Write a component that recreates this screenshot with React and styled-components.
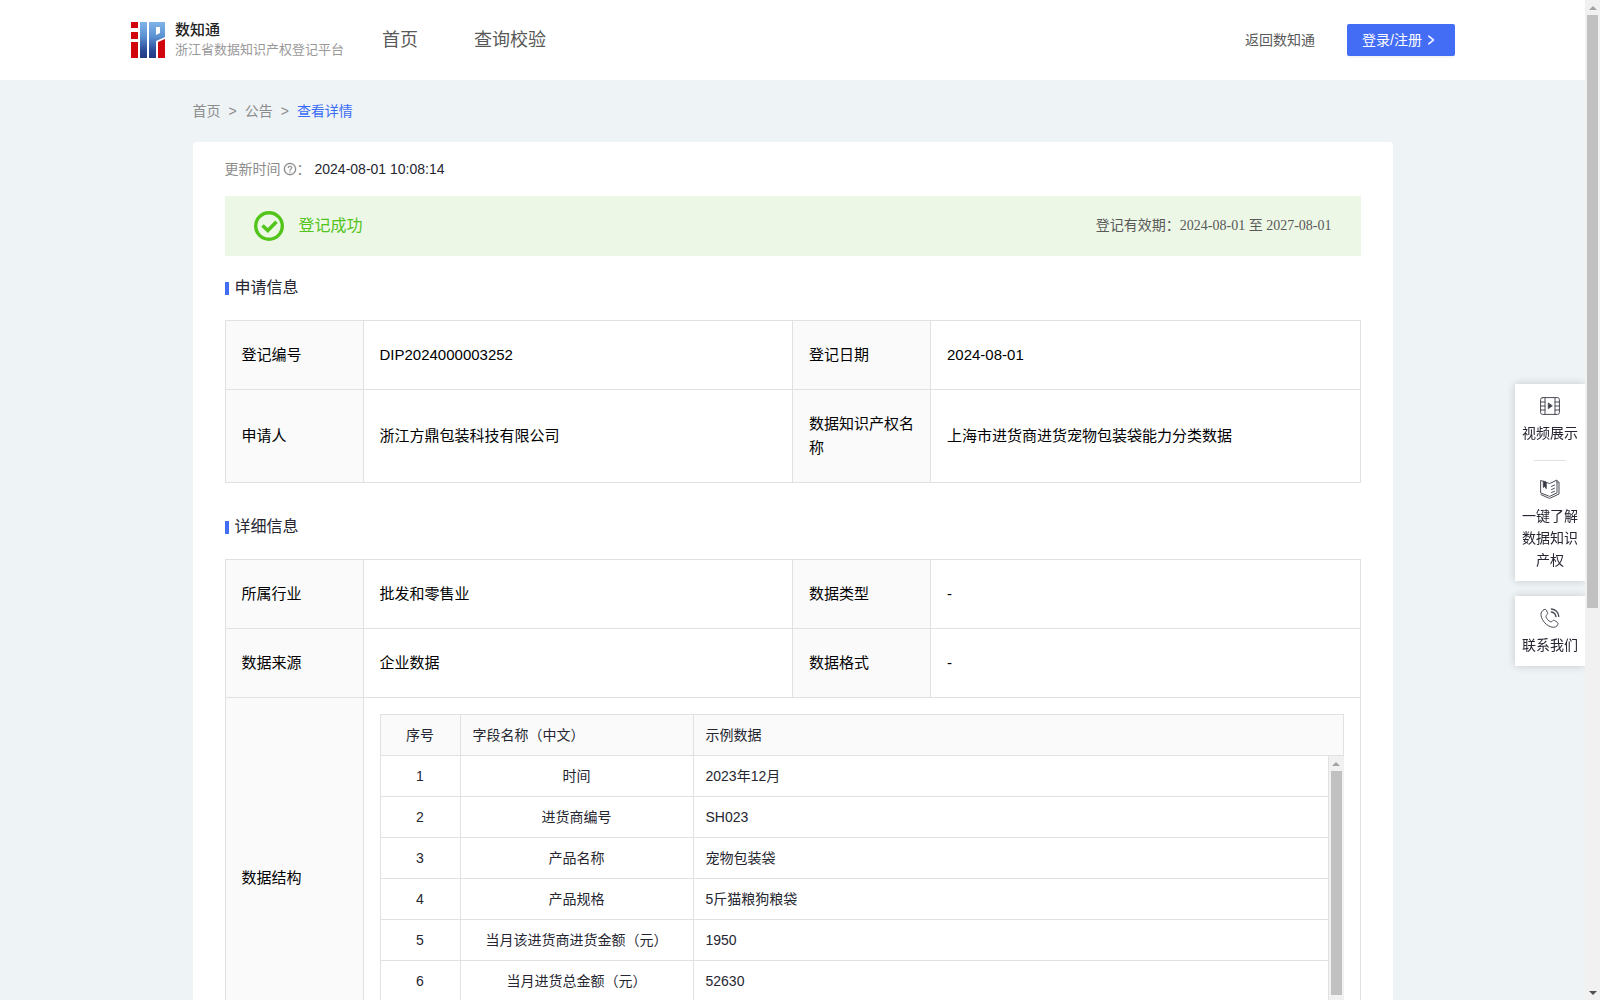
import React from "react"
import styled, { createGlobalStyle, css } from "styled-components"
import { AiOutlineQuestionCircle, AiOutlineRight } from "react-icons/ai"

const colors = {
	primary: "#446df6",
	link: "#3a6cf6",
	text: "#252631",
	secondary: "#595959",
	muted: "#8c8c8c",
	success: "#52c41a",
	successBg: "#ecf7e6",
	page: "#eef3f6",
	border: "#e1e1e1",
	label: "#fafafa",
}

const GlobalStyle = createGlobalStyle`
	* {
		box-sizing: border-box;
	}

	body {
		margin: 0;
		color: ${colors.text};
		font-family: "Liberation Sans", "Noto Sans CJK SC", sans-serif;
		font-size: 14px;
		line-height: 22px;
	}

	a {
		color: inherit;
		text-decoration: none;
	}
`

const Shell = styled.div`
	display: flex;
	height: 100vh;
	position: relative;
`

const Page = styled.div`
	background: ${colors.page};
	flex: 1;
	min-width: 0;
	overflow-y: auto;
	scrollbar-width: none;
`

/* scroll rail, used by the page and by the field list */
const Rail = styled.div`
	background: #f1f1f1;
	display: flex;
	flex: none;
	flex-direction: column;
	padding: 0 2px;
	width: 15px;
`

const RailArrow = styled.span`
	align-items: center;
	display: flex;
	flex: none;
	height: 15px;
	justify-content: center;

	&::before {
		border: 4px solid transparent;
		border-top-width: 0;
		border-bottom: 4px solid #a3a3a3;
		content: "";
	}

	${({ $down }) =>
		$down &&
		css`
			margin-top: auto;

			&::before {
				border-bottom: 0;
				border-top: 4px solid #505050;
			}
		`}
`

const RailThumb = styled.span`
	background: #c1c1c1;
	flex: none;
	height: ${({ $size }) => $size};
`

const Header = styled.header`
	align-items: center;
	background: #fff;
	display: flex;
	height: 80px;
	padding: 0 130px;
`

const Brand = styled.a`
	align-items: center;
	display: flex;
	gap: 9px;
`

const BrandName = styled.strong`
	color: #222;
	display: block;
	font-size: 15px;
	font-weight: 500;
	line-height: 20px;
`

const BrandSub = styled.span`
	color: #999;
	display: block;
	font-size: 13px;
	line-height: 20px;
`

const Nav = styled.nav`
	color: ${colors.secondary};
	display: flex;
	flex: 1;
	font-size: 18px;
	gap: 56px;
	margin-left: 38px;
`

const BackLink = styled.a`
	color: ${colors.secondary};
	margin-right: 32px;
`

const LoginButton = styled.button`
	align-items: center;
	background: ${colors.primary};
	border: none;
	border-radius: 2px;
	box-shadow: 0 2px 0 rgba(0, 0, 0, 0.04);
	color: #fff;
	display: flex;
	font: inherit;
	gap: 3px;
	height: 32px;
	padding: 0 15px;
	width: 108px;
`

const Container = styled.main`
	margin: 0 auto;
	max-width: 1200px;
`

const Breadcrumb = styled.nav`
	color: ${colors.muted};
	display: flex;
	gap: 8px;
	padding: 20px 0;

	[aria-current] {
		color: ${colors.link};
	}
`

const Card = styled.div`
	background: #fff;
	border-radius: 4px;
	padding: 16px 32px 32px;
`

const Updated = styled.div`
	align-items: center;
	display: flex;
	margin-bottom: 16px;

	svg {
		margin-left: 2px;
		stroke: currentColor;
		stroke-width: 20px;
	}
`

const UpdatedLabel = styled.span`
	align-items: center;
	color: ${colors.muted};
	display: flex;
	margin-right: 4px;
`

const Banner = styled.div`
	align-items: center;
	background: ${colors.successBg};
	display: flex;
	gap: 15px;
	height: 60px;
	margin-bottom: 20px;
	padding: 0 29px;
`

const BannerTitle = styled.span`
	color: ${colors.success};
	flex: 1;
	font-size: 16px;
`

const Validity = styled.span`
	color: ${colors.secondary};
	font-family: "Liberation Serif", "Noto Sans CJK SC", serif;
`

const SectionTitle = styled.h2`
	align-items: center;
	display: flex;
	font-size: 16px;
	font-weight: 400;
	gap: 6px;
	line-height: 24px;
	margin: 0 0 20px;

	&::before {
		background: ${colors.primary};
		content: "";
		height: 13px;
		width: 4px;
	}
`

const InfoTable = styled.table`
	border-collapse: collapse;
	color: #000;
	font-size: 15px;
	line-height: 24px;
	margin-bottom: 32px;
	table-layout: fixed;
	width: 100%;
`

const InfoLabel = styled.th`
	background: ${colors.label};
	border: 1px solid ${colors.border};
	font-weight: 400;
	padding: 22px 16px;
	text-align: left;
	width: 138px;
`

const InfoValue = styled.td`
	border: 1px solid ${colors.border};
	padding: ${({ $flush }) => ($flush ? "16px" : "22px 16px")};
`

const Fields = styled.div`
	border-left: 1px solid ${colors.border};
	border-top: 1px solid ${colors.border};
	color: ${colors.text};
	font-size: 14px;
	line-height: 22px;
`

const FieldsTable = styled.table`
	border-collapse: separate;
	border-spacing: 0;
	table-layout: fixed;
	width: 100%;

	th,
	td {
		border-bottom: 1px solid ${colors.border};
		border-right: 1px solid ${colors.border};
		font-weight: 400;
		height: 41px;
		padding: 0 12px;
		text-align: left;
	}

	th {
		background: ${colors.label};
	}

	th:first-child,
	td:first-child {
		text-align: center;
		width: 80px;
	}

	th:nth-child(2),
	td:nth-child(2) {
		width: 233px;
	}

	td:nth-child(2) {
		text-align: center;
	}
`

const FieldsBody = styled.div`
	display: flex;
	height: 286px;
`

const FieldsScroll = styled.div`
	flex: 1;
	overflow-y: auto;
	scrollbar-width: none;
`

const Dock = styled.aside`
	display: flex;
	flex-direction: column;
	gap: 15px;
	position: absolute;
	right: 15px;
	top: 384px;
	width: 70px;
`

const DockPanel = styled.div`
	background: #fff;
	box-shadow: 0 0 8px rgba(0, 0, 0, 0.18);
	clip-path: inset(-12px 0 -12px -12px);
	padding: 12px 7px 10px;
`

const DockItem = styled.a`
	align-items: center;
	display: flex;
	flex-direction: column;
	gap: 6px;
	text-align: center;
`

const DockDivider = styled.hr`
	border: none;
	border-top: 1px solid ${colors.border};
	margin: 16px auto 18px;
	width: 32px;
`

const LogoMark = () => (
	<svg width="36" height="36" viewBox="0 0 36 36" aria-hidden="true">
		<defs>
			<linearGradient id="blue" x1="0" y1="0" x2="0" y2="36" gradientUnits="userSpaceOnUse">
				<stop offset="0" stopColor="#7fb4e8" />
				<stop offset="0.4" stopColor="#5c92d2" />
				<stop offset="0.8" stopColor="#2a4a96" />
				<stop offset="1" stopColor="#243a80" />
			</linearGradient>
		</defs>
		<path fill="#d0060c" d="M1 0h7v6H1zM1 10h7v7H1zM1 20h7v16H1zM28 20l7-3v19h-7z" />
		<path fill="url(#blue)" d="M10 0h7v36h-7z" />
		<path fill="url(#blue)" fillRule="evenodd" d="M19 0h16v15l-9 4v17h-7zM26 5v8l4-2V5z" />
	</svg>
)

const SuccessIcon = () => (
	<svg width="30" height="30" viewBox="0 0 30 30" fill="none" stroke={colors.success} aria-hidden="true">
		<circle cx="15" cy="15" r="13.3" strokeWidth="3.4" />
		<path d="M8.5 14.5l5.3 5 8.7-8.7" strokeWidth="3.6" />
	</svg>
)

const DockIcon = ({ children }) => (
	<svg
		width="20"
		height="20"
		viewBox="0 0 20 20"
		fill="none"
		stroke="#4a4c55"
		strokeLinejoin="round"
		strokeLinecap="round"
		aria-hidden="true"
	>
		{children}
	</svg>
)

const VideoIcon = () => (
	<DockIcon>
		<rect x="0.6" y="1.6" width="18.8" height="16.8" rx="2" />
		<path d="M5 1.6v16.8M15 1.6v16.8M0.6 6H5M0.6 10H5M0.6 14H5M15 6h4.4M15 10h4.4M15 14h4.4" />
		<path fill="#333640" d="M8.3 7.4v5.2L12 10z" />
	</DockIcon>
)

const BookIcon = () => (
	<DockIcon>
		<path d="M1 1.600L8.500 4.200c.8.400 1.400.400 2 0L17 1v12.800l-6.500 3.200c-.8.400-1.400.400-2 0L1 14z" />
		<path d="M17 3h2v12l-8.500 4c-.6.300-1.200.300-2 0L1 15.600" />
		<path fill="#333640" d="M3.300 2.400v6l1.400-1 1.500 2.200V3.400z" />
		<path d="M11.500 7.400l3-1.400M11.500 10.600l3-1.400M11.500 13.600l3-1.400" />
	</DockIcon>
)

const PhoneIcon = () => (
	<DockIcon>
		<path d="M4.2 1.6C2 2.6.6 4.6 1 7.2c.8 5.6 5.6 10.8 11.2 12 2.6.4 4.800-.6 5.600-2.600.4-1 .2-1.800-.6-2.400l-2.400-1.600c-.8-.6-1.800-.4-2.400.4-.6.8-1.400 1-2.200.6-2-1-3.400-2.600-4.200-4.600-.2-.8 0-1.600.8-2.200.8-.4 1-1.200.6-2.200L6.400 2.200c-.4-.8-1.200-1-2.200-.6z" />
		<path d="M11.400 4c2.400.4 4.200 2.200 4.600 4.600M11.400 1c4 .4 7 3.400 7.400 7.400" strokeWidth="1.4" />
	</DockIcon>
)

const fields = [
	["时间", "2023年12月"],
	["进货商编号", "SH023"],
	["产品名称", "宠物包装袋"],
	["产品规格", "5斤猫粮狗粮袋"],
	["当月该进货商进货金额（元）", "1950"],
	["当月进货总金额（元）", "52630"],
]

const application = [
	["登记编号", "DIP2024000003252", "登记日期", "2024-08-01"],
	["申请人", "浙江方鼎包装科技有限公司", "数据知识产权名称", "上海市进货商进货宠物包装袋能力分类数据"],
]

const details = [
	["所属行业", "批发和零售业", "数据类型", "-"],
	["数据来源", "企业数据", "数据格式", "-"],
]

const InfoRows = ({ rows }) =>
	rows.map(([label, value, otherLabel, otherValue]) => (
		<tr key={label}>
			<InfoLabel scope="row">{label}</InfoLabel>
			<InfoValue>{value}</InfoValue>
			<InfoLabel scope="row">{otherLabel}</InfoLabel>
			<InfoValue>{otherValue}</InfoValue>
		</tr>
	))

const FieldList = () => (
	<Fields>
		<FieldsTable>
			<thead>
				<tr>
					<th>序号</th>
					<th>字段名称（中文）</th>
					<th>示例数据</th>
				</tr>
			</thead>
		</FieldsTable>
		<FieldsBody>
			<FieldsScroll>
				<FieldsTable>
					<tbody>
						{fields.map(([name, sample], index) => (
							<tr key={name}>
								<td>{index + 1}</td>
								<td>{name}</td>
								<td>{sample}</td>
							</tr>
						))}
					</tbody>
				</FieldsTable>
			</FieldsScroll>
			<Rail aria-hidden="true">
				<RailArrow />
				<RailThumb $size="224px" />
				<RailArrow $down />
			</Rail>
		</FieldsBody>
	</Fields>
)

const App = () => (
	<>
		<GlobalStyle />
		<Shell>
			<Page>
				<Header>
					<Brand href="#">
						<LogoMark />
						<span>
							<BrandName>数知通</BrandName>
							<BrandSub>浙江省数据知识产权登记平台</BrandSub>
						</span>
					</Brand>
					<Nav>
						<a href="#">首页</a>
						<a href="#">查询校验</a>
					</Nav>
					<BackLink href="#">返回数知通</BackLink>
					<LoginButton type="button">
						登录/注册
						<AiOutlineRight size={12} strokeWidth={60} />
					</LoginButton>
				</Header>
				<Container>
					<Breadcrumb>
						<a href="#">首页</a>
						<span>&gt;</span>
						<a href="#">公告</a>
						<span>&gt;</span>
						<a href="#" aria-current="page">
							查看详情
						</a>
					</Breadcrumb>
					<Card>
						<Updated>
							<UpdatedLabel>
								更新时间
								<AiOutlineQuestionCircle size={14} />：
							</UpdatedLabel>
							<time>2024-08-01 10:08:14</time>
						</Updated>
						<Banner>
							<SuccessIcon />
							<BannerTitle>登记成功</BannerTitle>
							<Validity>登记有效期：2024-08-01 至 2027-08-01</Validity>
						</Banner>
						<SectionTitle>申请信息</SectionTitle>
						<InfoTable>
							<tbody>
								<InfoRows rows={application} />
							</tbody>
						</InfoTable>
						<SectionTitle>详细信息</SectionTitle>
						<InfoTable>
							<tbody>
								<InfoRows rows={details} />
								<tr>
									<InfoLabel scope="row">数据结构</InfoLabel>
									<InfoValue colSpan={3} $flush>
										<FieldList />
									</InfoValue>
								</tr>
							</tbody>
						</InfoTable>
					</Card>
				</Container>
			</Page>
			<Rail aria-hidden="true">
				<RailArrow />
				<RailThumb $size="calc((100% - 30px) * 0.611)" />
				<RailArrow $down />
			</Rail>
			<Dock>
				<DockPanel>
					<DockItem href="#">
						<VideoIcon />
						视频展示
					</DockItem>
					<DockDivider />
					<DockItem href="#">
						<BookIcon />
						一键了解数据知识产权
					</DockItem>
				</DockPanel>
				<DockPanel>
					<DockItem href="#">
						<PhoneIcon />
						联系我们
					</DockItem>
				</DockPanel>
			</Dock>
		</Shell>
	</>
)

export default App
